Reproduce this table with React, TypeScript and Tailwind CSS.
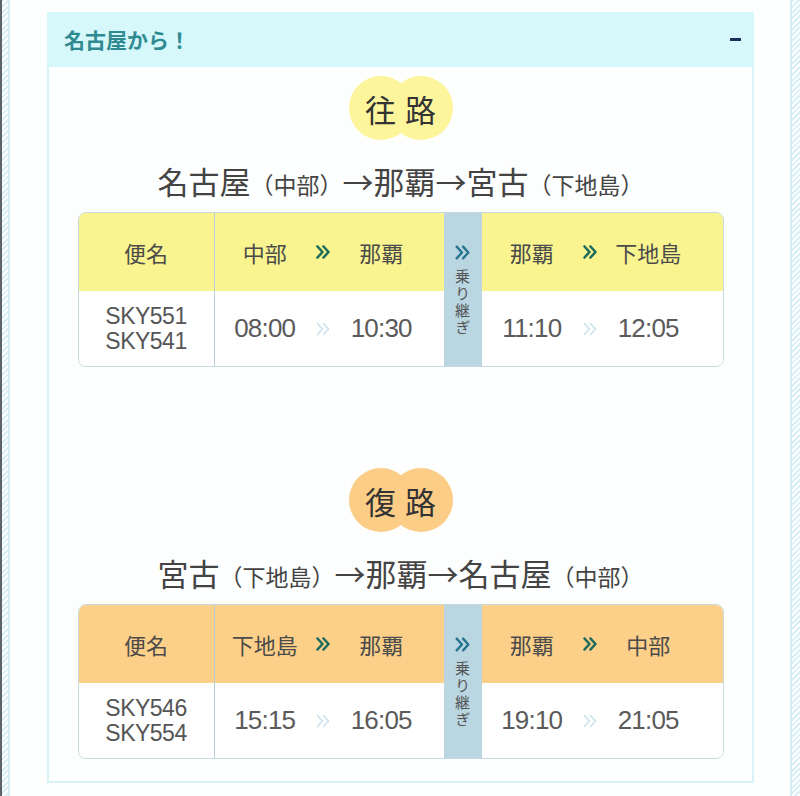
import type { ReactNode } from 'react';

type Leg = { from: string; to: string; dep: string; arr: string };

interface Trip {
  badge: [string, string];
  tone: 'yellow' | 'orange';
  route: { big: string; small?: string }[];
  flights: string[];
  leg1: Leg;
  leg2: Leg;
}

const trips: Trip[] = [
  {
    badge: ['往', '路'],
    tone: 'yellow',
    route: [
      { big: '名古屋', small: '（中部）' },
      { big: '→那覇→' },
      { big: '宮古', small: '（下地島）' },
    ],
    flights: ['SKY551', 'SKY541'],
    leg1: { from: '中部', to: '那覇', dep: '08:00', arr: '10:30' },
    leg2: { from: '那覇', to: '下地島', dep: '11:10', arr: '12:05' },
  },
  {
    badge: ['復', '路'],
    tone: 'orange',
    route: [
      { big: '宮古', small: '（下地島）' },
      { big: '→那覇→' },
      { big: '名古屋', small: '（中部）' },
    ],
    flights: ['SKY546', 'SKY554'],
    leg1: { from: '下地島', to: '那覇', dep: '15:15', arr: '16:05' },
    leg2: { from: '那覇', to: '中部', dep: '19:10', arr: '21:05' },
  },
];

function Chevrons({ className, width = 2.6 }: { className: string; width?: number }) {
  return (
    <svg viewBox="0 0 16 16" className={className} fill="none" stroke="currentColor" strokeWidth={width} strokeLinecap="round" strokeLinejoin="round">
      <polyline points="2.5,2.5 7.5,8 2.5,13.5" />
      <polyline points="8.5,2.5 13.5,8 8.5,13.5" />
    </svg>
  );
}

function Stripe({ side }: { side: 'left' | 'right' }) {
  return (
    <div className="flex h-full shrink-0">
      {side === 'left' && <div className="w-[2px] bg-[#5d6368]" />}
      {side === 'right' && <div className="w-[2px] bg-[#d3eff5]" />}
      <div className={`${side === 'left' ? 'w-[6px]' : 'w-[8px]'} bg-[repeating-linear-gradient(135deg,#d9eff6_0px,#d9eff6_2px,#ffffff_2px,#ffffff_4px)]`} />
      {side === 'left' && <div className="w-[2px] bg-[#d3eff5]" />}
    </div>
  );
}

function LegCell({ children, pr }: { children: ReactNode; pr: string }) {
  return <div className={`grid grid-cols-[1fr_16px_1fr] items-center text-center ${pr}`}>{children}</div>;
}

function Timetable({ trip }: { trip: Trip }) {
  const head = trip.tone === 'yellow' ? 'bg-[#f9f48f]' : 'bg-[#fcd089]';
  const time = "font-['Liberation_Sans','Noto_Sans_CJK_JP',sans-serif] text-[26px] tracking-[-0.8px] text-[#5a5a5a]";
  return (
    <div className="mx-auto grid w-[646px] grid-cols-[136px_229px_38px_1fr] grid-rows-[78px_75px] overflow-hidden rounded-[8px] border border-[#c6d9df] text-[#4b4b4b]">
      {/* header row */}
      <div className={`${head} flex items-center justify-center border-r border-[#b9cdd6] text-[22px]`}>便名</div>
      <div className={`${head} flex items-center`}>
        <LegCell pr="w-full pr-[12px]">
          <span className="text-[22px]">{trip.leg1.from}</span>
          <Chevrons className="h-[16px] w-[16px] text-[#1f6c5c]" />
          <span className="text-[22px]">{trip.leg1.to}</span>
        </LegCell>
      </div>
      <div className="row-span-2 flex flex-col items-center bg-[#b9d6e1] pt-[31px]">
        <Chevrons className="h-[17px] w-[17px] text-[#25738f]" width={2.2} />
        <span className="mt-[8px] text-[15px] leading-[15px] tracking-[2px] text-[#555] [writing-mode:vertical-rl]">乗り継ぎ</span>
      </div>
      <div className={`${head} flex items-center`}>
        <LegCell pr="w-full pr-[24px]">
          <span className="text-[22px]">{trip.leg2.from}</span>
          <Chevrons className="h-[16px] w-[16px] text-[#1f6c5c]" />
          <span className="text-[22px]">{trip.leg2.to}</span>
        </LegCell>
      </div>

      {/* body row */}
      <div className="flex flex-col items-center justify-center border-r border-[#b9cdd6] bg-white font-['Liberation_Sans',sans-serif] text-[23px] leading-[25px] tracking-[-0.5px] text-[#555]">
        {trip.flights.map((f) => (
          <span key={f}>{f}</span>
        ))}
      </div>
      <div className="flex items-center bg-white">
        <LegCell pr="w-full pr-[12px]">
          <span className={time}>{trip.leg1.dep}</span>
          <Chevrons className="h-[16px] w-[16px] text-[#c6e0ea]" width={1.4} />
          <span className={time}>{trip.leg1.arr}</span>
        </LegCell>
      </div>
      <div className="flex items-center bg-white">
        <LegCell pr="w-full pr-[24px]">
          <span className={time}>{trip.leg2.dep}</span>
          <Chevrons className="h-[16px] w-[16px] text-[#c6e0ea]" width={1.4} />
          <span className={time}>{trip.leg2.arr}</span>
        </LegCell>
      </div>
    </div>
  );
}

function TripBlock({ trip, className }: { trip: Trip; className: string }) {
  const dot = trip.tone === 'yellow' ? 'bg-[#fcf59b]' : 'bg-[#fbcd87]';
  return (
    <section className={className}>
      {/* badge: two overlapping circles */}
      <div className="relative mx-auto flex h-[64px] w-[104px]">
        <div className={`h-[64px] w-[64px] rounded-full ${dot}`} />
        <div className={`-ml-[24px] h-[64px] w-[64px] rounded-full ${dot}`} />
        <div className="absolute inset-0 flex items-center justify-center gap-[9px] text-[31px] leading-none text-[#333]">
          <span>{trip.badge[0]}</span>
          <span>{trip.badge[1]}</span>
        </div>
      </div>

      <p className="mt-[23px] text-center text-[31px] leading-[36px] text-[#444]">
        {trip.route.map((r, i) => (
          <span key={i}>
            {r.big}
            {r.small && <span className="text-[23px]">{r.small}</span>}
          </span>
        ))}
      </p>

      <div className="mt-[10px]">
        <Timetable trip={trip} />
      </div>
    </section>
  );
}

export default function App() {
  return (
    <div className="flex h-[796px] w-full overflow-hidden bg-[#fdfefe] font-['Noto_Sans_CJK_JP',sans-serif]">
      <Stripe side="left" />

      <main className="min-w-0 flex-1 pt-[12px]">
        <div className="ml-[37px] mr-[36px] border-2 border-t-0 border-[#d8f3f7] pb-[22px]">
          <header className="-mx-[2px] flex h-[55px] items-center justify-between bg-[#d6f8fb] pl-[17px] pr-[13px]">
            <h2 className="text-[21px] font-bold text-[#2f8b91]">名古屋から！</h2>
            <span className="h-[3px] w-[11px] bg-[#1d2f5c]" />
          </header>

          <TripBlock trip={trips[0]} className="pt-[9px]" />
          <TripBlock trip={trips[1]} className="mt-[101px]" />
        </div>
      </main>

      <Stripe side="right" />
    </div>
  );
}
